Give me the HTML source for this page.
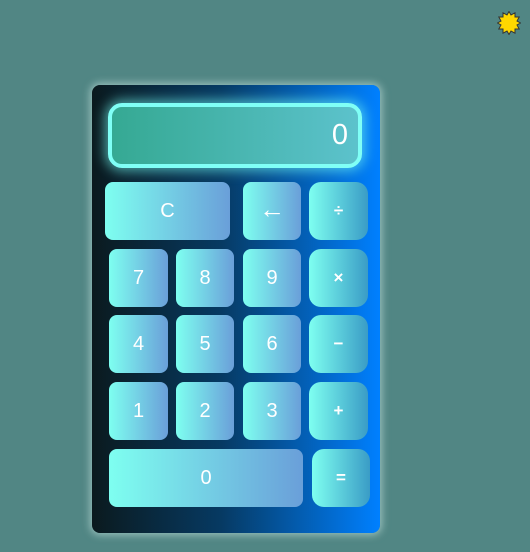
<!DOCTYPE html>
<html><head><style>
body{margin:0;width:530px;height:552px;background:#518684;position:relative;overflow:hidden;font-family:"Liberation Sans",sans-serif}
.calc{position:absolute;left:92px;top:85px;width:288px;height:448px;border-radius:8px;background:linear-gradient(90deg,#0b1a1e,#063a63 45%,#0080ff);box-shadow:0 0 8px 2px rgba(200,230,225,.6)}
.disp{position:absolute;left:108px;top:103px;width:246px;height:57px;border:4px solid #80fff6;border-radius:14px;background:linear-gradient(90deg,#35a993,#5cc2cc);box-shadow:0 0 12px 3px rgba(120,255,245,.6);color:#fff;font-size:29px;text-align:right;line-height:57px;padding-right:0}
.disp span{margin-right:10px}
.b{position:absolute;border-radius:8px;color:#fff;font-size:20px;display:flex;align-items:center;justify-content:center;background:linear-gradient(90deg,#7efff0,#6a9fd9)}
.o{background:linear-gradient(90deg,#7efff0,#3a9cc6);border-radius:12px;font-size:17px;font-weight:bold}
</style></head><body>
<svg style="position:absolute;left:497px;top:11px" width="24" height="24" viewBox="0 0 24 24"><polygon points="12,0.5 14,4 18,1.8 18,6 22.2,6 20,10 23.5,12 20,14 22.2,18 18,18 18,22.2 14,20 12,23.5 10,20 6,22.2 6,18 1.8,18 4,14 0.5,12 4,10 1.8,6 6,6 6,1.8 10,4" fill="#ffd700" stroke="#333" stroke-width="1"/></svg>
<div class="calc"></div>
<div class="disp"><span>0</span></div>
<div class="b" style="left:105px;top:182px;width:125px;height:58px">C</div>
<div class="b" style="left:243px;top:182px;width:58px;height:58px;font-size:26px;padding-bottom:4px;box-sizing:border-box">←</div>
<div class="b o" style="left:309px;top:182px;width:59px;height:58px">÷</div>
<div class="b" style="left:109px;top:249px;width:59px;height:58px">7</div>
<div class="b" style="left:176px;top:249px;width:58px;height:58px">8</div>
<div class="b" style="left:243px;top:249px;width:58px;height:58px">9</div>
<div class="b o" style="left:309px;top:249px;width:59px;height:58px">×</div>
<div class="b" style="left:109px;top:315px;width:59px;height:58px">4</div>
<div class="b" style="left:176px;top:315px;width:58px;height:58px">5</div>
<div class="b" style="left:243px;top:315px;width:58px;height:58px">6</div>
<div class="b o" style="left:309px;top:315px;width:59px;height:58px">−</div>
<div class="b" style="left:109px;top:382px;width:59px;height:58px">1</div>
<div class="b" style="left:176px;top:382px;width:58px;height:58px">2</div>
<div class="b" style="left:243px;top:382px;width:58px;height:58px">3</div>
<div class="b o" style="left:309px;top:382px;width:59px;height:58px">+</div>
<div class="b" style="left:109px;top:449px;width:194px;height:58px">0</div>
<div class="b o" style="left:312px;top:449px;width:58px;height:58px">=</div>
</body></html>
